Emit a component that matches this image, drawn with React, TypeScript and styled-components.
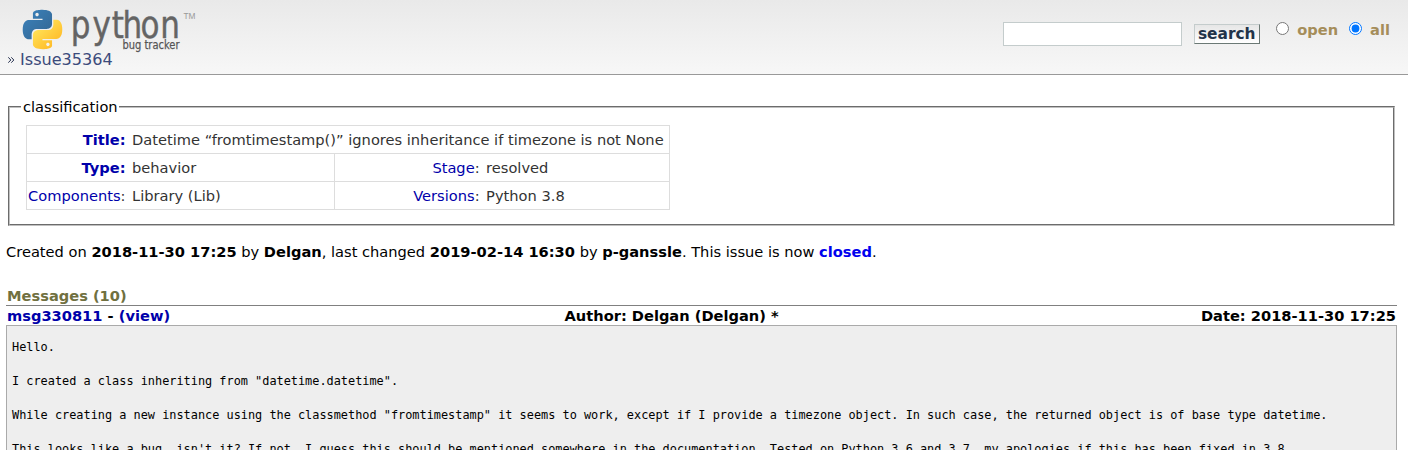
import React from 'react';
import styled, { createGlobalStyle } from 'styled-components';

const GlobalStyle = createGlobalStyle`
  body {
    margin: 0;
    height: 450px;
    overflow: hidden;
    background: #fff;
    color: #000;
    font: 14.63px/17px 'DejaVu Sans', sans-serif;
  }
`;

const Header = styled.header`
  box-sizing: border-box;
  height: 75px;
  display: flex;
  justify-content: space-between;
  border-bottom: 1px solid #999;
  background: linear-gradient(#e9e9e9, #f7f7f7);
`;

const Brand = styled.div`
  display: flex;
  flex-direction: column;
`;

const Logo = styled.svg`
  display: block;
  width: 220px;
  height: 50px;
`;

const Breadcrumb = styled.div`
  display: flex;
  align-items: center;
  gap: 6px;
  padding-left: 8px;
  font-size: 16.1px;
  line-height: 19px;
  color: #3c4b7b;
`;

const SearchForm = styled.form`
  display: flex;
  align-items: flex-start;
  padding: 22px 18px 0 0;
`;

const SearchInput = styled.input`
  box-sizing: border-box;
  width: 179px;
  height: 24px;
  margin: 0 12px 0 0;
  border: 1px solid #c4cccc;
  background: #fff;
`;

const SearchButton = styled.button`
  box-sizing: border-box;
  width: 66px;
  height: 20px;
  margin: 2px 16px 0 0;
  padding: 0 1px 0 0;
  border: 1px solid;
  border-color: #c4cccc #6b7975 #6b7975 #c4cccc;
  background: linear-gradient(#e6e6e6, #fff);
  color: #223349;
  font: bold 15.4px/16px 'DejaVu Sans', sans-serif;
`;

const Choice = styled.label`
  display: flex;
  align-items: flex-start;
  margin-right: 11px;
  color: #a58d5a;
  font-weight: bold;
  line-height: 15px;

  &:last-child {
    margin-right: 0;
  }

  input {
    width: 13px;
    height: 13px;
    margin: 0 8px 0 0;
  }
`;

const Content = styled.main`
  padding: 23px 11px 0 6px;
`;

const Classification = styled.fieldset`
  box-sizing: border-box;
  height: 128px;
  margin: 0 2px;
  padding: 10px 16px 0;
  border: 2px groove #c0c0c0;

  legend {
    margin-left: -5px;
    padding: 0 1px 0 2px;
  }
`;

const InfoTable = styled.table`
  border-collapse: collapse;
  color: #333;
  white-space: nowrap;

  th,
  td {
    height: 27px;
    padding: 0;
    border: 1px solid #ddd;
    border-width: 1px 0;
  }

  th {
    border-left-width: 1px;
    padding-left: 1px;
    text-align: right;
  }

  td {
    padding: 0 5.5px 0 6.5px;
  }

  td:last-child {
    border-right-width: 1px;
  }
`;

const FieldName = styled.th<{ $required?: boolean }>`
  color: ${(p) => (p.$required ? '#0000aa' : '#333')};
  font-weight: ${(p) => (p.$required ? 'bold' : 'normal')};

  a {
    color: #0000aa;
  }
`;

const Summary = styled.p`
  margin: 17px 0 27px;

  a {
    color: #00e;
    font-weight: bold;
  }
`;

const MessagesTitle = styled.h2`
  margin: 0;
  padding: 0 1px 1px;
  border-bottom: 1px solid #808080;
  color: #707040;
  font: bold 14.63px/17px 'DejaVu Sans', sans-serif;
`;

const MessageHead = styled.div`
  display: grid;
  grid-template-columns: 557.5px auto auto;
  padding: 1px 1px 1px;
  font-weight: bold;

  a {
    color: #0000aa;
  }

  span:last-child {
    justify-self: end;
  }
`;

const Message = styled.pre`
  margin: 0;
  padding: 13px 5px;
  border: 1px solid #aaa;
  background: #eee;
  font: 11.88px/17px 'DejaVu Sans Mono', monospace;
`;

const message = `Hello.

I created a class inheriting from "datetime.datetime".

While creating a new instance using the classmethod "fromtimestamp" it seems to work, except if I provide a timezone object. In such case, the returned object is of base type datetime.

This looks like a bug, isn't it? If not, I guess this should be mentioned somewhere in the documentation. Tested on Python 3.6 and 3.7, my apologies if this has been fixed in 3.8.`;

function PythonLogo() {
  return (
    <Logo viewBox="0 0 220 50" overflow="visible">
      <defs>
        <linearGradient id="blue" x1="0" y1="0" x2="1" y2="1">
          <stop offset="0" stopColor="#3b83bd" />
          <stop offset="1" stopColor="#336490" />
        </linearGradient>
        <linearGradient id="yellow" x1="0.1" y1="0.1" x2="0.8" y2="0.9">
          <stop offset="0" stopColor="#ffe860" />
          <stop offset="1" stopColor="#ffb925" />
        </linearGradient>
      </defs>
      <g transform="translate(22.8 9.8) scale(1.64)">
        <path
          fill="url(#blue)"
          d="M14.25.18l.9.2.73.26.59.3.45.32.34.34.25.34.16.33.1.3.04.26.02.2-.01.13V8.5l-.05.63-.13.55-.21.46-.26.38-.3.31-.33.25-.35.19-.35.14-.33.1-.3.07-.26.04-.21.02H8.77l-.69.05-.59.14-.5.22-.41.27-.33.32-.27.35-.2.36-.15.37-.1.35-.07.32-.04.27-.02.21v3.06H3.17l-.21-.03-.28-.07-.32-.12-.35-.18-.36-.26-.36-.36-.35-.46-.32-.59-.28-.73-.21-.88-.14-1.05-.05-1.23.06-1.22.16-1.04.24-.87.32-.71.36-.57.4-.44.42-.33.42-.24.4-.16.36-.1.32-.05.24-.01h.16l.06.01h8.16v-.83H6.18l-.01-2.75-.02-.37.05-.34.11-.31.17-.28.25-.26.31-.23.38-.2.44-.18.51-.15.58-.12.64-.1.71-.06.77-.04.84-.02 1.27.05zm-6.3 1.98l-.23.33-.08.41.08.41.23.34.33.22.41.09.41-.09.33-.22.23-.34.08-.41-.08-.41-.23-.33-.33-.22-.41-.09-.41.09z"
        />
        <path
          fill="url(#yellow)"
          d="M21.04 6.11l.28.06.32.12.35.18.36.27.36.35.35.47.32.59.28.73.21.88.14 1.04.05 1.23-.06 1.23-.16 1.04-.24.86-.32.71-.36.57-.4.45-.42.33-.42.24-.4.16-.36.09-.32.05-.24.02-.16-.01h-8.22v.82h5.84l.01 2.76.02.36-.05.34-.11.31-.17.29-.25.25-.31.24-.38.2-.44.17-.51.15-.58.13-.64.09-.71.07-.77.04-.84.01-1.27-.04-1.07-.14-.9-.2-.73-.25-.59-.3-.45-.33-.34-.34-.25-.34-.16-.33-.1-.3-.04-.25-.02-.2.01-.13v-5.34l.05-.64.13-.54.21-.46.26-.38.3-.32.33-.24.35-.2.35-.14.33-.1.3-.06.26-.04.21-.02.13-.01h5.84l.69-.05.59-.14.5-.21.41-.28.33-.32.27-.35.2-.36.15-.36.1-.35.07-.32.04-.28.02-.21V6.07h2.09l.14.01zm-6.47 14.25l-.23.33-.08.41.08.41.23.33.33.23.41.08.41-.08.33-.23.23-.33.08-.41-.08-.41-.23-.33-.33-.23-.41-.08-.41.08z"
        />
      </g>
      <text
        transform="scale(.84 1)"
        x="84.2 110.2 133 145.7 167.2 190.8"
        y="38.5"
        fill="#646464"
        stroke="#646464"
        strokeWidth=".45"
        fontFamily="'DejaVu Sans'"
        fontSize="37"
      >
        python
      </text>
      <text x="122.5" y="48.7" fill="#555" stroke="#555" strokeWidth=".25" fontFamily="'DejaVu Sans'" fontSize="11.5" textLength="57" lengthAdjust="spacingAndGlyphs">
        bug tracker
      </text>
      <text x="183.5" y="19" fill="#999" fontFamily="'Liberation Sans'" fontSize="8.5" textLength="12" lengthAdjust="spacingAndGlyphs">
        TM
      </text>
    </Logo>
  );
}

const Chevrons = () => (
  <svg width="6" height="6" viewBox="0 0 6 6" fill="none" stroke="#26304f">
    <path d="M.3.3L2.8 3L.3 5.7M3.3.3L5.8 3L3.3 5.7" />
  </svg>
);

export default function App() {
  return (
    <>
      <GlobalStyle />
      <Header>
        <Brand>
          <PythonLogo />
          <Breadcrumb>
            <Chevrons />
            Issue35364
          </Breadcrumb>
        </Brand>
        <SearchForm>
          <SearchInput type="text" />
          <SearchButton type="button">search</SearchButton>
          <Choice>
            <input type="radio" name="scope" />
            open
          </Choice>
          <Choice>
            <input type="radio" name="scope" defaultChecked />
            all
          </Choice>
        </SearchForm>
      </Header>
      <Content>
        <Classification>
          <legend>classification</legend>
          <InfoTable>
            <colgroup>
              <col style={{ width: 99 }} />
              <col style={{ width: 209 }} />
              <col style={{ width: 145 }} />
              <col style={{ width: 190 }} />
            </colgroup>
            <tbody>
              <tr>
                <FieldName $required>Title:</FieldName>
                <td colSpan={3}>Datetime “fromtimestamp()” ignores inheritance if timezone is not None</td>
              </tr>
              <tr>
                <FieldName $required>Type:</FieldName>
                <td>behavior</td>
                <FieldName><a>Stage</a>:</FieldName>
                <td>resolved</td>
              </tr>
              <tr>
                <FieldName><a>Components</a>:</FieldName>
                <td>Library (Lib)</td>
                <FieldName><a>Versions</a>:</FieldName>
                <td>Python 3.8</td>
              </tr>
            </tbody>
          </InfoTable>
        </Classification>
        <Summary>
          Created on <b>2018-11-30 17:25</b> by <b>Delgan</b>, last changed <b>2019-02-14 16:30</b> by{' '}
          <b>p-ganssle</b>. This issue is now <a>closed</a>.
        </Summary>
        <MessagesTitle>Messages (10)</MessagesTitle>
        <MessageHead>
          <span><a>msg330811</a> - <a>(view)</a></span>
          <span>Author: Delgan (Delgan) *</span>
          <span>Date: 2018-11-30 17:25</span>
        </MessageHead>
        <Message>{message}</Message>
      </Content>
    </>
  );
}
